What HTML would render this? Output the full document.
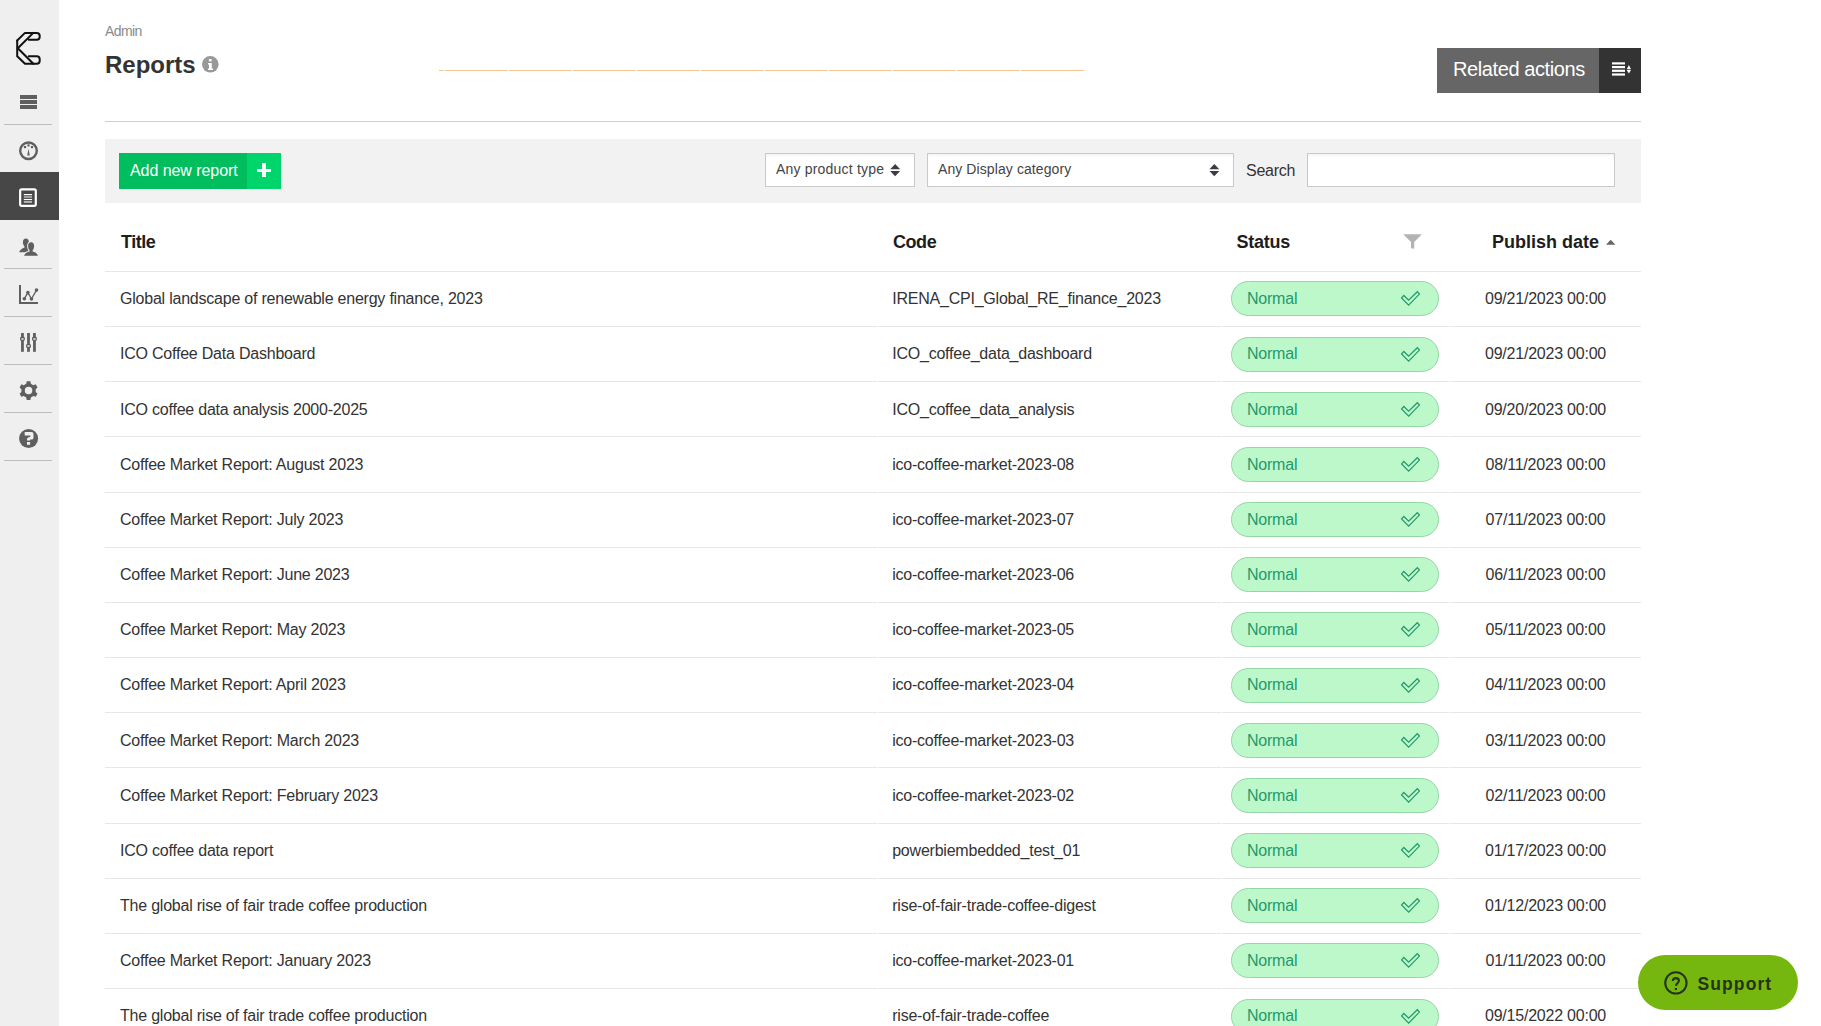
<!DOCTYPE html>
<html><head><meta charset="utf-8"><style>
html,body{margin:0;padding:0;width:1821px;height:1026px;overflow:hidden;background:#fff;font-family:"Liberation Sans",sans-serif}
.ab{position:absolute}
.t{white-space:nowrap;line-height:1}
#sb{position:absolute;left:0;top:0;width:59px;height:1026px;background:#efefef}
.sep{left:4px;width:48px;height:1px;background:#bdbdbd}
.sel{background:#fff;border:1px solid #c9c9c9;box-shadow:inset 0 2px 2px rgba(0,0,0,0.04)}
.pill{width:206px;height:33px;border:1px solid #94d6a6;background:#bdf8cb;border-radius:18px}
</style></head><body>
<div id="sb">
<svg class="ab" style="left:0;top:0" width="59" height="80" viewBox="0 0 59 80">
<g fill="none" stroke="#111" stroke-width="2" stroke-linejoin="round" stroke-linecap="round">
<path d="M17.2 40.5 L25 32.9 L36.7 32.9 Q39.7 32.9 39.7 35.9 L39.7 36.8 Q39.7 39.8 36.7 39.8 L28.8 39.8"/>
<path d="M33.3 32.9 L17.8 48.3 L33.3 63.8"/>
<path d="M17.2 40.5 L17.2 56.3 L25 63.8 L36.7 63.8 Q39.7 63.8 39.7 60.8 L39.7 59.3 Q39.7 56.3 36.7 56.3 L28.8 56.3"/>
</g></svg>
<div class="ab" style="left:20px;top:95px;width:17px;height:3.6px;background:#5f5f5f"></div>
<div class="ab" style="left:20px;top:100.3px;width:17px;height:3.6px;background:#5f5f5f"></div>
<div class="ab" style="left:20px;top:105.3px;width:17px;height:3.6px;background:#5f5f5f"></div>
<div class="ab sep" style="top:124px"></div>
<div class="ab sep" style="top:268px"></div>
<div class="ab sep" style="top:316px"></div>
<div class="ab sep" style="top:364px"></div>
<div class="ab sep" style="top:412px"></div>
<div class="ab sep" style="top:460px"></div>
<svg class="ab" style="left:18px;top:140px" width="22" height="22" viewBox="0 0 22 22">
<circle cx="10.5" cy="10.75" r="8.3" fill="none" stroke="#5f5f5f" stroke-width="2.4"/>
<rect x="5.9" y="6" width="2.2" height="2.2" fill="#5f5f5f"/><rect x="9.4" y="4.3" width="2.2" height="2.2" fill="#5f5f5f"/><rect x="12.9" y="6" width="2.2" height="2.2" fill="#5f5f5f"/>
<path d="M10.5 8.8 L11.75 15.4 L9.25 15.4 Z" fill="#5f5f5f"/>
</svg>
<div class="ab" style="left:0;top:172px;width:59px;height:48px;background:#474747"></div>
<svg class="ab" style="left:18px;top:187px" width="20" height="21" viewBox="0 0 20 21">
<rect x="2.15" y="2.3" width="15.65" height="16.5" rx="1.5" fill="none" stroke="#fff" stroke-width="2.2"/>
<rect x="5.8" y="7" width="8.3" height="1.2" fill="#fff"/>
<rect x="5.8" y="8.9" width="8.3" height="2" fill="#a5a5a5"/>
<rect x="5.8" y="11.9" width="8.3" height="1.2" fill="#fff"/>
<rect x="5.8" y="14" width="8.3" height="1.9" fill="#b5b5b5"/>
</svg>
<svg class="ab" style="left:18px;top:237px" width="22" height="21" viewBox="0 0 22 21">
<path fill="#5f5f5f" d="M7.9 1.5 C9.8 1.5 10.9 3 10.9 5.2 C10.9 7.2 10.1 8.7 9.5 9.5 L9.5 10.6 C10.5 10.9 11.2 11.2 11.8 11.6 L9.6 15.3 L1.1 15.3 C2 13 4.3 11.4 6.5 10.6 L6.5 9.5 C5.8 8.7 4.9 7.2 4.9 5.2 C4.9 3 6 1.5 7.9 1.5 Z"/>
<path fill="#5f5f5f" stroke="#efefef" stroke-width="2" paint-order="stroke" d="M13.1 5.3 C15 5.3 16.1 6.8 16.1 9 C16.1 11.2 15.2 12.8 14.6 13.6 L14.6 14.6 C16.7 15 19.2 16.4 19.9 18.7 L6 18.7 C7 16.4 9.5 15 11.6 14.6 L11.6 13.6 C11 12.8 10.1 11.2 10.1 9 C10.1 6.8 11.2 5.3 13.1 5.3 Z"/>
</svg>
<svg class="ab" style="left:18px;top:284px" width="22" height="22" viewBox="0 0 22 22">
<path d="M2 1 L2 19 L20 19" fill="none" stroke="#5f5f5f" stroke-width="2"/>
<path d="M6.35 14.7 L9.9 8.6 L13.45 15 L18.5 6.1" fill="none" stroke="#5f5f5f" stroke-width="1.3"/>
<circle cx="6.35" cy="14.7" r="1.8" fill="#5f5f5f"/><circle cx="9.9" cy="8.6" r="1.8" fill="#5f5f5f"/><circle cx="13.45" cy="15" r="1.8" fill="#5f5f5f"/><circle cx="18.5" cy="6.1" r="1.8" fill="#5f5f5f"/>
</svg>
<svg class="ab" style="left:18px;top:331px" width="22" height="23" viewBox="0 0 22 23">
<g fill="#5f5f5f">
<rect x="3.05" y="2" width="2.8" height="18.8"/>
<rect x="9.1" y="2" width="2.8" height="18.8"/>
<rect x="15.05" y="2" width="2.8" height="18.8"/>
</g>
<g fill="#efefef" stroke="#5f5f5f" stroke-width="1.3">
<rect x="2.7" y="6.5" width="3.5" height="2.8" rx="0.7"/>
<rect x="8.75" y="13.6" width="3.5" height="2.8" rx="0.7"/>
<rect x="14.7" y="6.5" width="3.5" height="2.8" rx="0.7"/>
</g>
</svg>
<svg class="ab" style="left:18px;top:380px" width="22" height="22" viewBox="0 0 22 22">
<path fill="#5f5f5f" fill-rule="evenodd" d="M8.24 3.68 L8.73 1.28 L12.37 1.28 L12.86 3.68 L15.39 5.14 L17.72 4.37 L19.53 7.51 L17.70 9.14 L17.70 12.06 L19.53 13.69 L17.72 16.83 L15.39 16.06 L12.86 17.52 L12.37 19.92 L8.73 19.92 L8.24 17.52 L5.71 16.06 L3.38 16.83 L1.57 13.69 L3.40 12.06 L3.40 9.14 L1.57 7.51 L3.38 4.37 L5.71 5.14 Z M14.30 10.60 A3.75 3.75 0 1 0 6.80 10.60 A3.75 3.75 0 1 0 14.30 10.60 Z"/>
</svg>
<svg class="ab" style="left:18px;top:428px" width="22" height="22" viewBox="0 0 22 22">
<circle cx="10.6" cy="10.5" r="9.5" fill="#5f5f5f"/>
<path d="M6.7 4 L13.6 4 Q15.5 4 15.5 5.9 L15.5 9.7 Q15.5 11.6 13.5 11.6 L12.1 11.6 L12.1 12.6 L9 12.6 L9 11.4 Q9 9.8 10.8 9.3 L12.3 8.9 L12.3 7.4 L6.7 7.4 Z" fill="#efefef"/>
<rect x="9" y="14" width="3.1" height="2.8" fill="#efefef"/>
</svg>
</div>
<div class="ab t" style="left:105px;top:24px;font-size:14px;color:#8a8a8a;font-weight:normal;letter-spacing:-0.6px">Admin</div>
<div class="ab t" style="left:105px;top:53px;font-size:24px;color:#333;font-weight:bold;">Reports</div>
<svg class="ab" style="left:201px;top:55px" width="19" height="19" viewBox="0 0 19 19">
<circle cx="9.3" cy="9.3" r="8.3" fill="#999"/>
<rect x="7.9" y="4" width="2.7" height="2.4" fill="#fff"/>
<path d="M7 8.1 L10.8 8.1 L10.8 13.4 L12 13.4 L12 15 L7 15 L7 13.4 L8 13.4 L8 9.8 L7 9.4 Z" fill="#fff"/>
</svg>
<div class="ab" style="left:439px;top:70px;width:5px;height:1px;background:#f2c794"></div>
<div class="ab" style="left:445px;top:70px;width:63px;height:1px;background:#f2c794"></div>
<div class="ab" style="left:509px;top:70px;width:63px;height:1px;background:#f2c794"></div>
<div class="ab" style="left:573px;top:70px;width:63px;height:1px;background:#f2c794"></div>
<div class="ab" style="left:637px;top:70px;width:63px;height:1px;background:#f2c794"></div>
<div class="ab" style="left:701px;top:70px;width:63px;height:1px;background:#f2c794"></div>
<div class="ab" style="left:765px;top:70px;width:63px;height:1px;background:#f2c794"></div>
<div class="ab" style="left:829px;top:70px;width:63px;height:1px;background:#f2c794"></div>
<div class="ab" style="left:893px;top:70px;width:63px;height:1px;background:#f2c794"></div>
<div class="ab" style="left:957px;top:70px;width:63px;height:1px;background:#f2c794"></div>
<div class="ab" style="left:1021px;top:70px;width:63px;height:1px;background:#f2c794"></div>
<div class="ab" style="left:1437px;top:48px;width:162px;height:45px;background:#666"></div>
<div class="ab" style="left:1599px;top:48px;width:42px;height:45px;background:#333"></div>
<div class="ab t" style="left:1453px;top:59px;font-size:20px;color:#fff;font-weight:normal;letter-spacing:-0.4px">Related actions</div>
<svg class="ab" style="left:1610px;top:61px" width="23" height="17" viewBox="0 0 23 17">
<g fill="#fff"><rect x="2" y="1.3" width="13" height="2.2"/><rect x="2" y="5" width="13" height="2.2"/><rect x="2" y="8.7" width="13" height="2.2"/><rect x="2" y="12.4" width="13" height="2.2"/>
<path d="M16.7 8.2 L18.9 4 L21 8.2 Z"/><path d="M16.7 9 L18.9 12.4 L21 9 Z"/></g>
</svg>
<div class="ab" style="left:105px;top:121px;width:1536px;height:1px;background:#cfcfcf"></div>
<div class="ab" style="left:105px;top:139px;width:1536px;height:64px;background:#f2f2f2"></div>
<div class="ab" style="left:119px;top:153px;width:128px;height:36px;background:#00bd5e"></div>
<div class="ab" style="left:247px;top:153px;width:34px;height:36px;background:#00d56b"></div>
<div class="ab t" style="left:130px;top:163px;font-size:16px;color:#fff;font-weight:normal;letter-spacing:-0.06px">Add new report</div>
<div class="ab" style="left:257px;top:168.8px;width:14px;height:3.2px;background:#fff"></div>
<div class="ab" style="left:262.4px;top:163.4px;width:3.2px;height:14px;background:#fff"></div>
<div class="ab sel" style="left:765px;top:153px;width:148px;height:32px"></div>
<div class="ab t" style="left:776px;top:162px;font-size:14px;color:#444;font-weight:normal;letter-spacing:0.19px">Any product type</div>
<svg class="ab" style="left:890px;top:164px" width="11" height="13" viewBox="0 0 11 13"><path d="M0.3 5.2 L5.2 0 L10.2 5.2 Z M0.3 7 L5.2 12.2 L10.2 7 Z" fill="#3a3d42"/></svg>
<div class="ab sel" style="left:927px;top:153px;width:305px;height:32px"></div>
<div class="ab t" style="left:938px;top:162px;font-size:14px;color:#444;font-weight:normal;letter-spacing:0.09px">Any Display category</div>
<svg class="ab" style="left:1209px;top:164px" width="11" height="13" viewBox="0 0 11 13"><path d="M0.3 5.2 L5.2 0 L10.2 5.2 Z M0.3 7 L5.2 12.2 L10.2 7 Z" fill="#3a3d42"/></svg>
<div class="ab t" style="left:1246px;top:163px;font-size:16px;color:#333;font-weight:normal;letter-spacing:-0.25px">Search</div>
<div class="ab sel" style="left:1307px;top:153px;width:306px;height:32px"></div>
<div class="ab t" style="left:121px;top:233px;font-size:18px;color:#1d1d1d;font-weight:bold;letter-spacing:-0.5px">Title</div>
<div class="ab t" style="left:893px;top:233px;font-size:18px;color:#1d1d1d;font-weight:bold;letter-spacing:-0.45px">Code</div>
<div class="ab t" style="left:1236.5px;top:233px;font-size:18px;color:#1d1d1d;font-weight:bold;letter-spacing:-0.25px">Status</div>
<svg class="ab" style="left:1402px;top:233px" width="21" height="17" viewBox="0 0 21 17">
<path d="M1.2 1.3 L19.9 1.3 L12.2 9 L12.2 15.8 L9 15.2 L9 9 Z" fill="#b3b3b3"/>
</svg>
<div class="ab t" style="left:1492px;top:233px;font-size:18px;color:#1d1d1d;font-weight:bold;">Publish date</div>
<svg class="ab" style="left:1605px;top:239px" width="12" height="7" viewBox="0 0 12 7"><path d="M1 5.8 L5.7 0.8 L10.4 5.8 Z" fill="#666"/></svg>
<div class="ab" style="left:105px;top:271px;width:1536px;height:1px;background:#e6e6e6"></div>
<div class="ab t" style="left:120px;top:291px;font-size:16px;color:#333;font-weight:normal;letter-spacing:-0.22px">Global landscape of renewable energy finance, 2023</div>
<div class="ab t" style="left:892.2px;top:291px;font-size:16px;color:#333;font-weight:normal;letter-spacing:-0.22px">IRENA_CPI_Global_RE_finance_2023</div>
<div class="ab t" style="left:1450px;top:291px;font-size:16px;color:#333;font-weight:normal;width:191px;text-align:center;letter-spacing:-0.22px">09/21/2023 00:00</div>
<div class="ab pill" style="left:1231px;top:281px"></div>
<div class="ab t" style="left:1247px;top:291px;font-size:16px;color:#1f9a6c;font-weight:normal;letter-spacing:-0.22px">Normal</div>
<svg class="ab" style="left:1399px;top:290px" width="23" height="17" viewBox="0 0 23 17"><path d="M2.6 7.9 L4.8 5.5 L9.65 10.2 L18.3 1.7 L20.4 4.1 L9.65 15.1 Z" fill="none" stroke="#23996a" stroke-width="1.25" stroke-linejoin="miter"/></svg>
<div class="ab" style="left:105px;top:326px;width:772px;height:1px;background:#e6e6e6"></div>
<div class="ab" style="left:878px;top:326px;width:343px;height:1px;background:#e6e6e6"></div>
<div class="ab" style="left:1222px;top:326px;width:227px;height:1px;background:#e6e6e6"></div>
<div class="ab" style="left:1450px;top:326px;width:191px;height:1px;background:#e6e6e6"></div>
<div class="ab t" style="left:120px;top:346px;font-size:16px;color:#333;font-weight:normal;letter-spacing:-0.22px">ICO Coffee Data Dashboard</div>
<div class="ab t" style="left:892.2px;top:346px;font-size:16px;color:#333;font-weight:normal;letter-spacing:-0.22px">ICO_coffee_data_dashboard</div>
<div class="ab t" style="left:1450px;top:346px;font-size:16px;color:#333;font-weight:normal;width:191px;text-align:center;letter-spacing:-0.22px">09/21/2023 00:00</div>
<div class="ab pill" style="left:1231px;top:337px"></div>
<div class="ab t" style="left:1247px;top:346px;font-size:16px;color:#1f9a6c;font-weight:normal;letter-spacing:-0.22px">Normal</div>
<svg class="ab" style="left:1399px;top:346px" width="23" height="17" viewBox="0 0 23 17"><path d="M2.6 7.9 L4.8 5.5 L9.65 10.2 L18.3 1.7 L20.4 4.1 L9.65 15.1 Z" fill="none" stroke="#23996a" stroke-width="1.25" stroke-linejoin="miter"/></svg>
<div class="ab" style="left:105px;top:381px;width:772px;height:1px;background:#e6e6e6"></div>
<div class="ab" style="left:878px;top:381px;width:343px;height:1px;background:#e6e6e6"></div>
<div class="ab" style="left:1222px;top:381px;width:227px;height:1px;background:#e6e6e6"></div>
<div class="ab" style="left:1450px;top:381px;width:191px;height:1px;background:#e6e6e6"></div>
<div class="ab t" style="left:120px;top:402px;font-size:16px;color:#333;font-weight:normal;letter-spacing:-0.22px">ICO coffee data analysis 2000-2025</div>
<div class="ab t" style="left:892.2px;top:402px;font-size:16px;color:#333;font-weight:normal;letter-spacing:-0.22px">ICO_coffee_data_analysis</div>
<div class="ab t" style="left:1450px;top:402px;font-size:16px;color:#333;font-weight:normal;width:191px;text-align:center;letter-spacing:-0.22px">09/20/2023 00:00</div>
<div class="ab pill" style="left:1231px;top:392px"></div>
<div class="ab t" style="left:1247px;top:402px;font-size:16px;color:#1f9a6c;font-weight:normal;letter-spacing:-0.22px">Normal</div>
<svg class="ab" style="left:1399px;top:401px" width="23" height="17" viewBox="0 0 23 17"><path d="M2.6 7.9 L4.8 5.5 L9.65 10.2 L18.3 1.7 L20.4 4.1 L9.65 15.1 Z" fill="none" stroke="#23996a" stroke-width="1.25" stroke-linejoin="miter"/></svg>
<div class="ab" style="left:105px;top:436px;width:772px;height:1px;background:#e6e6e6"></div>
<div class="ab" style="left:878px;top:436px;width:343px;height:1px;background:#e6e6e6"></div>
<div class="ab" style="left:1222px;top:436px;width:227px;height:1px;background:#e6e6e6"></div>
<div class="ab" style="left:1450px;top:436px;width:191px;height:1px;background:#e6e6e6"></div>
<div class="ab t" style="left:120px;top:457px;font-size:16px;color:#333;font-weight:normal;letter-spacing:-0.22px">Coffee Market Report: August 2023</div>
<div class="ab t" style="left:892.2px;top:457px;font-size:16px;color:#333;font-weight:normal;letter-spacing:-0.22px">ico-coffee-market-2023-08</div>
<div class="ab t" style="left:1450px;top:457px;font-size:16px;color:#333;font-weight:normal;width:191px;text-align:center;letter-spacing:-0.22px">08/11/2023 00:00</div>
<div class="ab pill" style="left:1231px;top:447px"></div>
<div class="ab t" style="left:1247px;top:457px;font-size:16px;color:#1f9a6c;font-weight:normal;letter-spacing:-0.22px">Normal</div>
<svg class="ab" style="left:1399px;top:456px" width="23" height="17" viewBox="0 0 23 17"><path d="M2.6 7.9 L4.8 5.5 L9.65 10.2 L18.3 1.7 L20.4 4.1 L9.65 15.1 Z" fill="none" stroke="#23996a" stroke-width="1.25" stroke-linejoin="miter"/></svg>
<div class="ab" style="left:105px;top:492px;width:772px;height:1px;background:#e6e6e6"></div>
<div class="ab" style="left:878px;top:492px;width:343px;height:1px;background:#e6e6e6"></div>
<div class="ab" style="left:1222px;top:492px;width:227px;height:1px;background:#e6e6e6"></div>
<div class="ab" style="left:1450px;top:492px;width:191px;height:1px;background:#e6e6e6"></div>
<div class="ab t" style="left:120px;top:512px;font-size:16px;color:#333;font-weight:normal;letter-spacing:-0.22px">Coffee Market Report: July 2023</div>
<div class="ab t" style="left:892.2px;top:512px;font-size:16px;color:#333;font-weight:normal;letter-spacing:-0.22px">ico-coffee-market-2023-07</div>
<div class="ab t" style="left:1450px;top:512px;font-size:16px;color:#333;font-weight:normal;width:191px;text-align:center;letter-spacing:-0.22px">07/11/2023 00:00</div>
<div class="ab pill" style="left:1231px;top:502px"></div>
<div class="ab t" style="left:1247px;top:512px;font-size:16px;color:#1f9a6c;font-weight:normal;letter-spacing:-0.22px">Normal</div>
<svg class="ab" style="left:1399px;top:511px" width="23" height="17" viewBox="0 0 23 17"><path d="M2.6 7.9 L4.8 5.5 L9.65 10.2 L18.3 1.7 L20.4 4.1 L9.65 15.1 Z" fill="none" stroke="#23996a" stroke-width="1.25" stroke-linejoin="miter"/></svg>
<div class="ab" style="left:105px;top:547px;width:772px;height:1px;background:#e6e6e6"></div>
<div class="ab" style="left:878px;top:547px;width:343px;height:1px;background:#e6e6e6"></div>
<div class="ab" style="left:1222px;top:547px;width:227px;height:1px;background:#e6e6e6"></div>
<div class="ab" style="left:1450px;top:547px;width:191px;height:1px;background:#e6e6e6"></div>
<div class="ab t" style="left:120px;top:567px;font-size:16px;color:#333;font-weight:normal;letter-spacing:-0.22px">Coffee Market Report: June 2023</div>
<div class="ab t" style="left:892.2px;top:567px;font-size:16px;color:#333;font-weight:normal;letter-spacing:-0.22px">ico-coffee-market-2023-06</div>
<div class="ab t" style="left:1450px;top:567px;font-size:16px;color:#333;font-weight:normal;width:191px;text-align:center;letter-spacing:-0.22px">06/11/2023 00:00</div>
<div class="ab pill" style="left:1231px;top:557px"></div>
<div class="ab t" style="left:1247px;top:567px;font-size:16px;color:#1f9a6c;font-weight:normal;letter-spacing:-0.22px">Normal</div>
<svg class="ab" style="left:1399px;top:566px" width="23" height="17" viewBox="0 0 23 17"><path d="M2.6 7.9 L4.8 5.5 L9.65 10.2 L18.3 1.7 L20.4 4.1 L9.65 15.1 Z" fill="none" stroke="#23996a" stroke-width="1.25" stroke-linejoin="miter"/></svg>
<div class="ab" style="left:105px;top:602px;width:772px;height:1px;background:#e6e6e6"></div>
<div class="ab" style="left:878px;top:602px;width:343px;height:1px;background:#e6e6e6"></div>
<div class="ab" style="left:1222px;top:602px;width:227px;height:1px;background:#e6e6e6"></div>
<div class="ab" style="left:1450px;top:602px;width:191px;height:1px;background:#e6e6e6"></div>
<div class="ab t" style="left:120px;top:622px;font-size:16px;color:#333;font-weight:normal;letter-spacing:-0.22px">Coffee Market Report: May 2023</div>
<div class="ab t" style="left:892.2px;top:622px;font-size:16px;color:#333;font-weight:normal;letter-spacing:-0.22px">ico-coffee-market-2023-05</div>
<div class="ab t" style="left:1450px;top:622px;font-size:16px;color:#333;font-weight:normal;width:191px;text-align:center;letter-spacing:-0.22px">05/11/2023 00:00</div>
<div class="ab pill" style="left:1231px;top:612px"></div>
<div class="ab t" style="left:1247px;top:622px;font-size:16px;color:#1f9a6c;font-weight:normal;letter-spacing:-0.22px">Normal</div>
<svg class="ab" style="left:1399px;top:621px" width="23" height="17" viewBox="0 0 23 17"><path d="M2.6 7.9 L4.8 5.5 L9.65 10.2 L18.3 1.7 L20.4 4.1 L9.65 15.1 Z" fill="none" stroke="#23996a" stroke-width="1.25" stroke-linejoin="miter"/></svg>
<div class="ab" style="left:105px;top:657px;width:772px;height:1px;background:#e6e6e6"></div>
<div class="ab" style="left:878px;top:657px;width:343px;height:1px;background:#e6e6e6"></div>
<div class="ab" style="left:1222px;top:657px;width:227px;height:1px;background:#e6e6e6"></div>
<div class="ab" style="left:1450px;top:657px;width:191px;height:1px;background:#e6e6e6"></div>
<div class="ab t" style="left:120px;top:677px;font-size:16px;color:#333;font-weight:normal;letter-spacing:-0.22px">Coffee Market Report: April 2023</div>
<div class="ab t" style="left:892.2px;top:677px;font-size:16px;color:#333;font-weight:normal;letter-spacing:-0.22px">ico-coffee-market-2023-04</div>
<div class="ab t" style="left:1450px;top:677px;font-size:16px;color:#333;font-weight:normal;width:191px;text-align:center;letter-spacing:-0.22px">04/11/2023 00:00</div>
<div class="ab pill" style="left:1231px;top:668px"></div>
<div class="ab t" style="left:1247px;top:677px;font-size:16px;color:#1f9a6c;font-weight:normal;letter-spacing:-0.22px">Normal</div>
<svg class="ab" style="left:1399px;top:677px" width="23" height="17" viewBox="0 0 23 17"><path d="M2.6 7.9 L4.8 5.5 L9.65 10.2 L18.3 1.7 L20.4 4.1 L9.65 15.1 Z" fill="none" stroke="#23996a" stroke-width="1.25" stroke-linejoin="miter"/></svg>
<div class="ab" style="left:105px;top:712px;width:772px;height:1px;background:#e6e6e6"></div>
<div class="ab" style="left:878px;top:712px;width:343px;height:1px;background:#e6e6e6"></div>
<div class="ab" style="left:1222px;top:712px;width:227px;height:1px;background:#e6e6e6"></div>
<div class="ab" style="left:1450px;top:712px;width:191px;height:1px;background:#e6e6e6"></div>
<div class="ab t" style="left:120px;top:733px;font-size:16px;color:#333;font-weight:normal;letter-spacing:-0.22px">Coffee Market Report: March 2023</div>
<div class="ab t" style="left:892.2px;top:733px;font-size:16px;color:#333;font-weight:normal;letter-spacing:-0.22px">ico-coffee-market-2023-03</div>
<div class="ab t" style="left:1450px;top:733px;font-size:16px;color:#333;font-weight:normal;width:191px;text-align:center;letter-spacing:-0.22px">03/11/2023 00:00</div>
<div class="ab pill" style="left:1231px;top:723px"></div>
<div class="ab t" style="left:1247px;top:733px;font-size:16px;color:#1f9a6c;font-weight:normal;letter-spacing:-0.22px">Normal</div>
<svg class="ab" style="left:1399px;top:732px" width="23" height="17" viewBox="0 0 23 17"><path d="M2.6 7.9 L4.8 5.5 L9.65 10.2 L18.3 1.7 L20.4 4.1 L9.65 15.1 Z" fill="none" stroke="#23996a" stroke-width="1.25" stroke-linejoin="miter"/></svg>
<div class="ab" style="left:105px;top:767px;width:772px;height:1px;background:#e6e6e6"></div>
<div class="ab" style="left:878px;top:767px;width:343px;height:1px;background:#e6e6e6"></div>
<div class="ab" style="left:1222px;top:767px;width:227px;height:1px;background:#e6e6e6"></div>
<div class="ab" style="left:1450px;top:767px;width:191px;height:1px;background:#e6e6e6"></div>
<div class="ab t" style="left:120px;top:788px;font-size:16px;color:#333;font-weight:normal;letter-spacing:-0.22px">Coffee Market Report: February 2023</div>
<div class="ab t" style="left:892.2px;top:788px;font-size:16px;color:#333;font-weight:normal;letter-spacing:-0.22px">ico-coffee-market-2023-02</div>
<div class="ab t" style="left:1450px;top:788px;font-size:16px;color:#333;font-weight:normal;width:191px;text-align:center;letter-spacing:-0.22px">02/11/2023 00:00</div>
<div class="ab pill" style="left:1231px;top:778px"></div>
<div class="ab t" style="left:1247px;top:788px;font-size:16px;color:#1f9a6c;font-weight:normal;letter-spacing:-0.22px">Normal</div>
<svg class="ab" style="left:1399px;top:787px" width="23" height="17" viewBox="0 0 23 17"><path d="M2.6 7.9 L4.8 5.5 L9.65 10.2 L18.3 1.7 L20.4 4.1 L9.65 15.1 Z" fill="none" stroke="#23996a" stroke-width="1.25" stroke-linejoin="miter"/></svg>
<div class="ab" style="left:105px;top:823px;width:772px;height:1px;background:#e6e6e6"></div>
<div class="ab" style="left:878px;top:823px;width:343px;height:1px;background:#e6e6e6"></div>
<div class="ab" style="left:1222px;top:823px;width:227px;height:1px;background:#e6e6e6"></div>
<div class="ab" style="left:1450px;top:823px;width:191px;height:1px;background:#e6e6e6"></div>
<div class="ab t" style="left:120px;top:843px;font-size:16px;color:#333;font-weight:normal;letter-spacing:-0.22px">ICO coffee data report</div>
<div class="ab t" style="left:892.2px;top:843px;font-size:16px;color:#333;font-weight:normal;letter-spacing:-0.22px">powerbiembedded_test_01</div>
<div class="ab t" style="left:1450px;top:843px;font-size:16px;color:#333;font-weight:normal;width:191px;text-align:center;letter-spacing:-0.22px">01/17/2023 00:00</div>
<div class="ab pill" style="left:1231px;top:833px"></div>
<div class="ab t" style="left:1247px;top:843px;font-size:16px;color:#1f9a6c;font-weight:normal;letter-spacing:-0.22px">Normal</div>
<svg class="ab" style="left:1399px;top:842px" width="23" height="17" viewBox="0 0 23 17"><path d="M2.6 7.9 L4.8 5.5 L9.65 10.2 L18.3 1.7 L20.4 4.1 L9.65 15.1 Z" fill="none" stroke="#23996a" stroke-width="1.25" stroke-linejoin="miter"/></svg>
<div class="ab" style="left:105px;top:878px;width:772px;height:1px;background:#e6e6e6"></div>
<div class="ab" style="left:878px;top:878px;width:343px;height:1px;background:#e6e6e6"></div>
<div class="ab" style="left:1222px;top:878px;width:227px;height:1px;background:#e6e6e6"></div>
<div class="ab" style="left:1450px;top:878px;width:191px;height:1px;background:#e6e6e6"></div>
<div class="ab t" style="left:120px;top:898px;font-size:16px;color:#333;font-weight:normal;letter-spacing:-0.22px">The global rise of fair trade coffee production</div>
<div class="ab t" style="left:892.2px;top:898px;font-size:16px;color:#333;font-weight:normal;letter-spacing:-0.22px">rise-of-fair-trade-coffee-digest</div>
<div class="ab t" style="left:1450px;top:898px;font-size:16px;color:#333;font-weight:normal;width:191px;text-align:center;letter-spacing:-0.22px">01/12/2023 00:00</div>
<div class="ab pill" style="left:1231px;top:888px"></div>
<div class="ab t" style="left:1247px;top:898px;font-size:16px;color:#1f9a6c;font-weight:normal;letter-spacing:-0.22px">Normal</div>
<svg class="ab" style="left:1399px;top:897px" width="23" height="17" viewBox="0 0 23 17"><path d="M2.6 7.9 L4.8 5.5 L9.65 10.2 L18.3 1.7 L20.4 4.1 L9.65 15.1 Z" fill="none" stroke="#23996a" stroke-width="1.25" stroke-linejoin="miter"/></svg>
<div class="ab" style="left:105px;top:933px;width:772px;height:1px;background:#e6e6e6"></div>
<div class="ab" style="left:878px;top:933px;width:343px;height:1px;background:#e6e6e6"></div>
<div class="ab" style="left:1222px;top:933px;width:227px;height:1px;background:#e6e6e6"></div>
<div class="ab" style="left:1450px;top:933px;width:191px;height:1px;background:#e6e6e6"></div>
<div class="ab t" style="left:120px;top:953px;font-size:16px;color:#333;font-weight:normal;letter-spacing:-0.22px">Coffee Market Report: January 2023</div>
<div class="ab t" style="left:892.2px;top:953px;font-size:16px;color:#333;font-weight:normal;letter-spacing:-0.22px">ico-coffee-market-2023-01</div>
<div class="ab t" style="left:1450px;top:953px;font-size:16px;color:#333;font-weight:normal;width:191px;text-align:center;letter-spacing:-0.22px">01/11/2023 00:00</div>
<div class="ab pill" style="left:1231px;top:943px"></div>
<div class="ab t" style="left:1247px;top:953px;font-size:16px;color:#1f9a6c;font-weight:normal;letter-spacing:-0.22px">Normal</div>
<svg class="ab" style="left:1399px;top:952px" width="23" height="17" viewBox="0 0 23 17"><path d="M2.6 7.9 L4.8 5.5 L9.65 10.2 L18.3 1.7 L20.4 4.1 L9.65 15.1 Z" fill="none" stroke="#23996a" stroke-width="1.25" stroke-linejoin="miter"/></svg>
<div class="ab" style="left:105px;top:988px;width:772px;height:1px;background:#e6e6e6"></div>
<div class="ab" style="left:878px;top:988px;width:343px;height:1px;background:#e6e6e6"></div>
<div class="ab" style="left:1222px;top:988px;width:227px;height:1px;background:#e6e6e6"></div>
<div class="ab" style="left:1450px;top:988px;width:191px;height:1px;background:#e6e6e6"></div>
<div class="ab t" style="left:120px;top:1008px;font-size:16px;color:#333;font-weight:normal;letter-spacing:-0.22px">The global rise of fair trade coffee production</div>
<div class="ab t" style="left:892.2px;top:1008px;font-size:16px;color:#333;font-weight:normal;letter-spacing:-0.22px">rise-of-fair-trade-coffee</div>
<div class="ab t" style="left:1450px;top:1008px;font-size:16px;color:#333;font-weight:normal;width:191px;text-align:center;letter-spacing:-0.22px">09/15/2022 00:00</div>
<div class="ab pill" style="left:1231px;top:999px"></div>
<div class="ab t" style="left:1247px;top:1008px;font-size:16px;color:#1f9a6c;font-weight:normal;letter-spacing:-0.22px">Normal</div>
<svg class="ab" style="left:1399px;top:1008px" width="23" height="17" viewBox="0 0 23 17"><path d="M2.6 7.9 L4.8 5.5 L9.65 10.2 L18.3 1.7 L20.4 4.1 L9.65 15.1 Z" fill="none" stroke="#23996a" stroke-width="1.25" stroke-linejoin="miter"/></svg>
<div class="ab" style="left:1638px;top:955px;width:160px;height:55px;border-radius:27.5px;background:#75b70e"></div>
<svg class="ab" style="left:1663px;top:970px" width="26" height="26" viewBox="0 0 26 26">
<circle cx="12.9" cy="12.9" r="10.65" fill="none" stroke="#26331a" stroke-width="2.1"/>
<path d="M9.9 11 C9.9 9 11.2 8.1 12.9 8.1 C14.6 8.1 15.9 9.2 15.9 10.8 C15.9 12.8 13.6 13.4 13.1 15 L13 15.9" fill="none" stroke="#26331a" stroke-width="2.1"/>
<rect x="11.8" y="18" width="2.2" height="2.1" fill="#26331a"/>
</svg>
<div class="ab t" style="left:1697.5px;top:975.5px;font-size:17.5px;color:#26331a;font-weight:bold;letter-spacing:1.1px">Support</div>
</body></html>
